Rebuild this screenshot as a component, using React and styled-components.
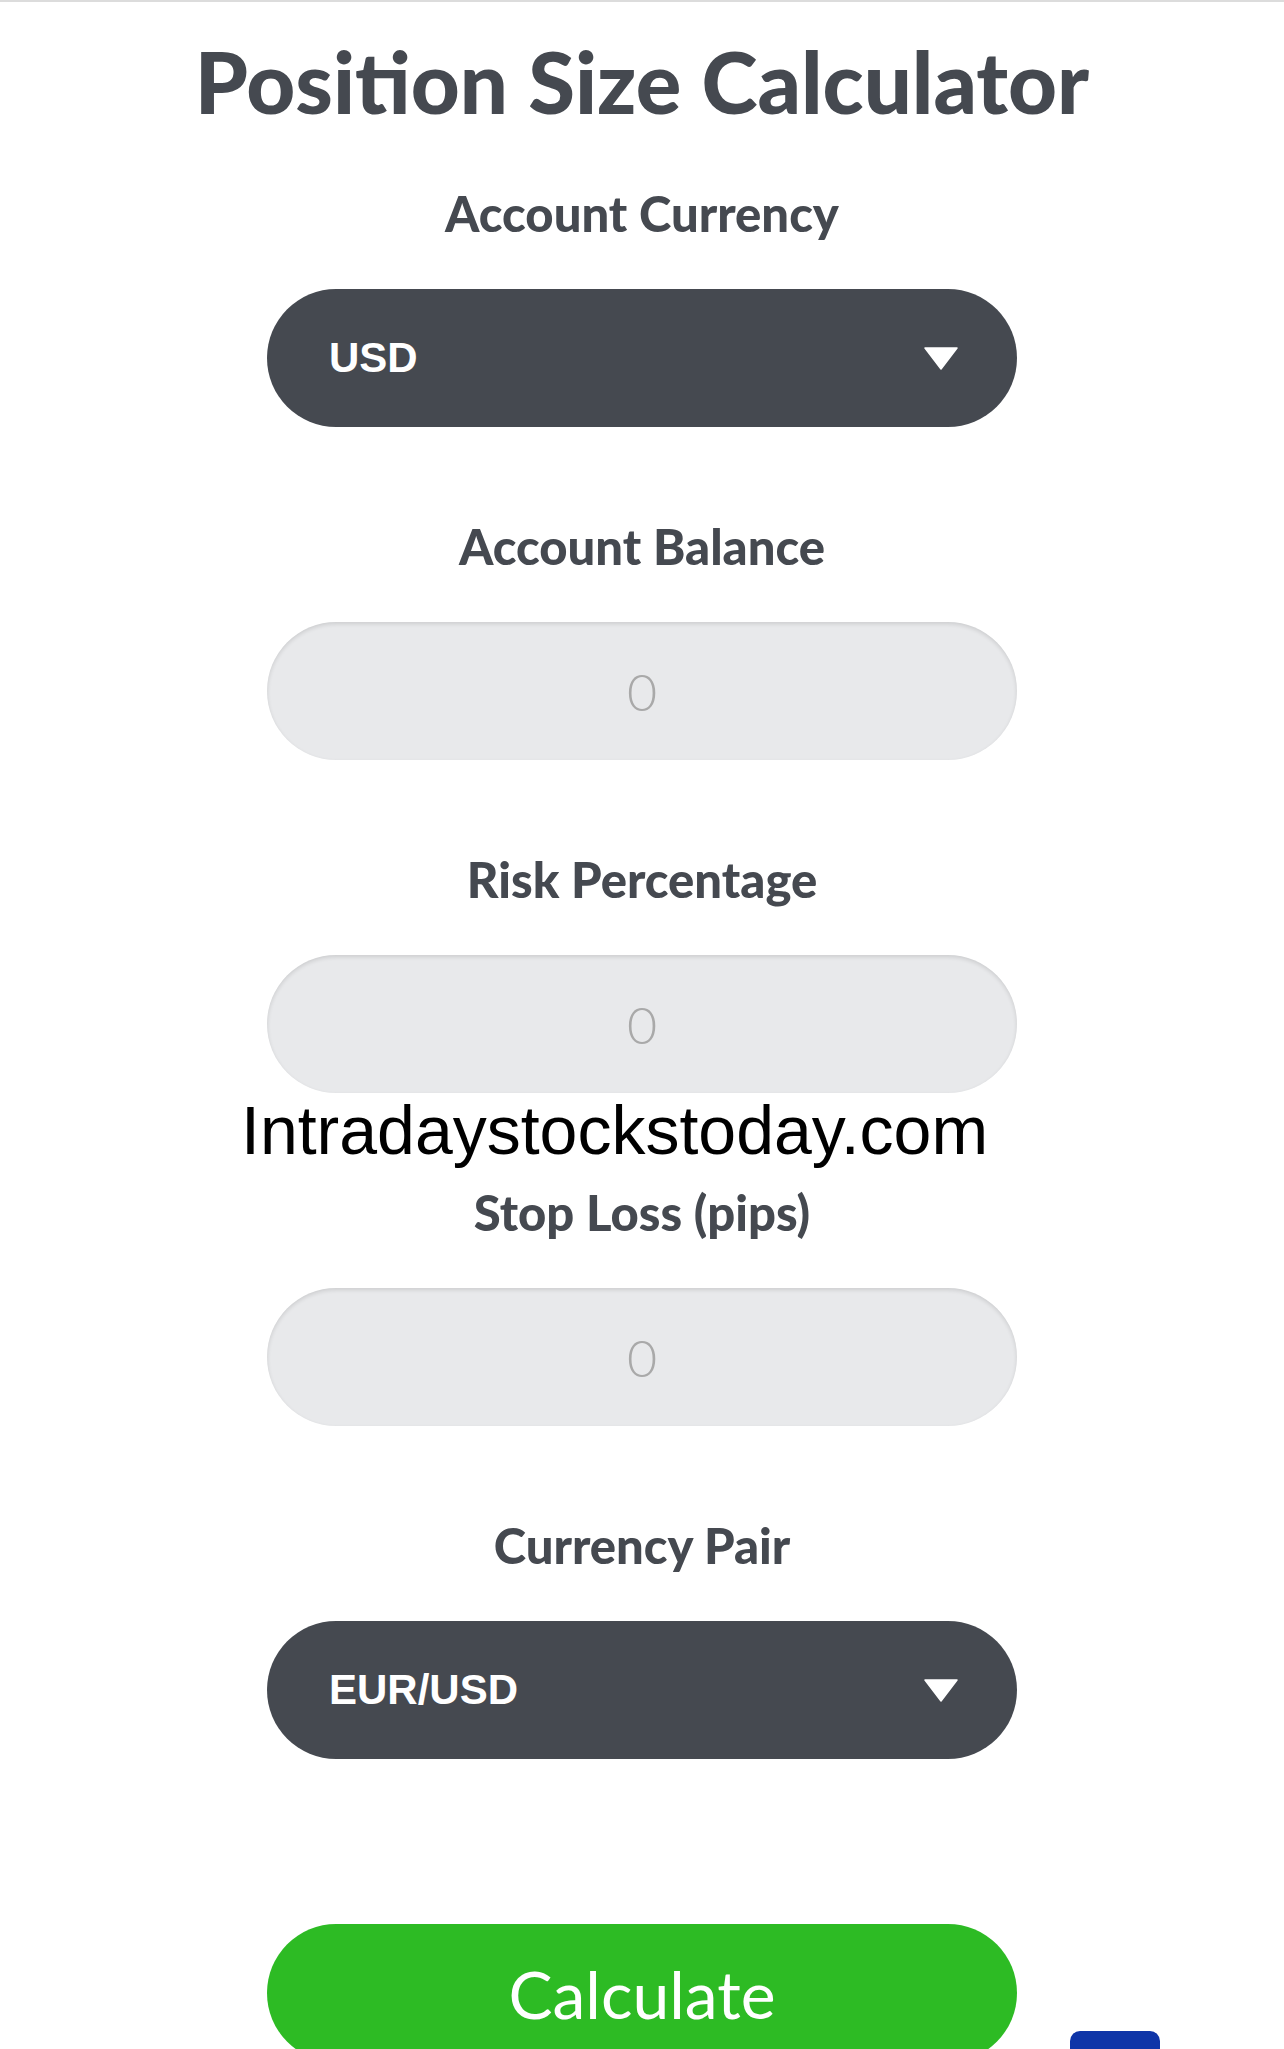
import React from 'react';
import styled, { createGlobalStyle } from 'styled-components';

const GlobalStyle = createGlobalStyle`
  html, body {
    margin: 0;
    padding: 0;
    background: #ffffff;
    overflow: hidden;
  }
  #root {
    height: 2049px;
    overflow: hidden;
  }
`;

const fields = [
  { label: 'Account Currency', type: 'select', value: 'USD' },
  { label: 'Account Balance', type: 'input' },
  { label: 'Risk Percentage', type: 'input' },
  { label: 'Stop Loss (pips)', type: 'input' },
  { label: 'Currency Pair', type: 'select', value: 'EUR/USD' },
];

const Caret = () => (
  <svg width="34" height="23" viewBox="0 0 34 23">
    <polygon points="1,1 33,1 17,22" fill="#ffffff" stroke="#ffffff" strokeWidth="1.5" strokeLinejoin="round" />
  </svg>
);

const App = () => {
  return (
    <Page>
      <GlobalStyle />
      <Title>Position Size Calculator</Title>
      <Form>
        {fields.map(f => (
          <Field key={f.label}>
            <Label>{f.label}</Label>
            {f.type === 'select' ? (
              <Select>
                <span>{f.value}</span>
                <Caret />
              </Select>
            ) : (
              <Input type="text" placeholder="0" />
            )}
          </Field>
        ))}
        <CalcButton type="button">Calculate</CalcButton>
      </Form>
      <Watermark>Intradaystockstoday.com</Watermark>
      <FloatTab />
    </Page>
  );
};

export default App;

const Page = styled.div`
  position: relative;
  border-top: 2px solid #dcdcdc;
  display: flex;
  flex-direction: column;
  align-items: center;
  min-height: 2047px;
`;

const Title = styled.h1`
  margin: 29px 0 0;
  font-family: Lato, "Open Sans", sans-serif;
  font-weight: 900;
  font-size: 85px;
  line-height: 100px;
  color: #454950;
  text-align: center;
`;

const Form = styled.div`
  display: flex;
  flex-direction: column;
  align-items: center;
  gap: 89px;
  margin-top: 52px;
  width: 750px;
`;

const Field = styled.div`
  display: flex;
  flex-direction: column;
  align-items: center;
  gap: 46px;
  width: 100%;
`;

const Label = styled.div`
  font-family: Lato, "Open Sans", sans-serif;
  font-weight: 900;
  font-size: 49px;
  line-height: 60px;
  color: #454950;
`;

const Select = styled.div`
  box-sizing: border-box;
  width: 100%;
  height: 138px;
  border-radius: 69px;
  background: #454950;
  display: flex;
  align-items: center;
  justify-content: space-between;
  padding: 0 59px 0 62px;
  color: #ffffff;
  font-family: "Liberation Sans", Arial, sans-serif;
  font-weight: 700;
  font-size: 42px;
`;

const Input = styled.input`
  box-sizing: border-box;
  width: 100%;
  height: 138px;
  border: none;
  border-radius: 69px;
  background: #e8e9eb;
  box-shadow: inset 0 2px 4px rgba(0, 0, 0, 0.12);
  outline: none;
  text-align: center;
  font-family: Lato, "Open Sans", sans-serif;
  font-weight: 300;
  font-size: 52px;
  color: #454950;

  &::placeholder {
    color: #a9a9a9;
  }
`;

const CalcButton = styled.button`
  margin-top: 76px;
  width: 100%;
  height: 138px;
  border: none;
  border-radius: 69px;
  background: #2dbb24;
  color: #ffffff;
  font-family: Lato, "Open Sans", sans-serif;
  font-weight: 400;
  font-size: 66px;
  cursor: pointer;
`;

const Watermark = styled.div`
  position: absolute;
  left: 241px;
  top: 1095px;
  font-family: "Liberation Sans", Arial, sans-serif;
  font-size: 68px;
  line-height: 67px;
  color: #000000;
  white-space: nowrap;
`;

const FloatTab = styled.div`
  position: absolute;
  left: 1070px;
  top: 2029px;
  width: 90px;
  height: 40px;
  border-radius: 10px 10px 0 0;
  background: #0f35a8;
`;
